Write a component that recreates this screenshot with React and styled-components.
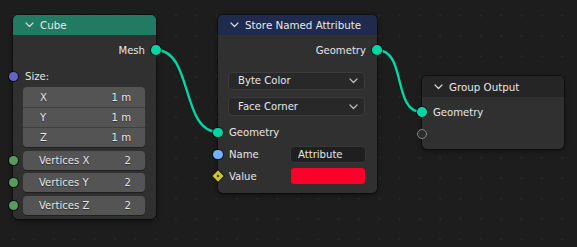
import React from "react";
import styled, { createGlobalStyle } from "styled-components";

const GlobalStyle = createGlobalStyle`
  body {
    margin: 0;
    background: #1d1d1d;
  }
`;

const Canvas = styled.div`
  position: relative;
  width: 577px;
  height: 247px;
  overflow: hidden;
  background-color: #1d1d1d;
  background-image: radial-gradient(circle, #282828 0.9px, transparent 1.3px);
  background-size: 20.33px 20.33px;
  background-position: 3.2px 5.5px;
  font-family: "DejaVu Sans", "Liberation Sans", sans-serif;
  font-size: 10.1px;
  color: #e6e6e6;
`;

const Wires = styled.svg`
  position: absolute;
  left: 0;
  top: 0;
  width: 577px;
  height: 247px;
  pointer-events: none;
`;

const Node = styled.div`
  position: absolute;
  left: ${(p) => p.x}px;
  top: ${(p) => p.y}px;
  width: ${(p) => p.w}px;
  display: flex;
  flex-direction: column;
  background: #303030;
  border-radius: 5px;
  box-shadow: 0 0 0 1px rgba(0, 0, 0, 0.35), 0 2px 5px rgba(0, 0, 0, 0.45);
`;

const Header = styled.div`
  height: ${(p) => p.h || 20}px;
  display: flex;
  align-items: center;
  padding-left: 12px;
  gap: 6px;
  background: ${(p) => p.color};
  border-radius: 5px 5px 0 0;
  font-size: 10.3px;
  color: #e8e8e8;
`;

const Body = styled.div`
  display: flex;
  flex-direction: column;
  padding: ${(p) => p.pad || "5px 0 5px"};
`;

const Row = styled.div`
  position: relative;
  height: ${(p) => p.h || 20}px;
  margin-top: ${(p) => p.mt || 0}px;
  display: flex;
  align-items: center;
  justify-content: ${(p) => (p.out ? "flex-end" : "flex-start")};
  padding: 0 11px 0 ${(p) => p.pl || 11}px;
`;

const Socket = styled.span`
  position: absolute;
  top: 50%;
  ${(p) => (p.out ? "right" : "left")}: -${(p) => (p.size || 9.5) / 2}px;
  width: ${(p) => p.size || 9.5}px;
  height: ${(p) => p.size || 9.5}px;
  margin-top: -${(p) => (p.size || 9.5) / 2}px;
  border-radius: 50%;
  background: ${(p) => p.color};
  box-shadow: 0 0 0 1px rgba(0, 0, 0, 0.55);
`;

const HollowSocket = styled(Socket)`
  background: #2c2c2c;
  box-shadow: none;
  border: 1.4px solid #858585;
  box-sizing: border-box;
`;

const Diamond = styled.span`
  position: absolute;
  top: 50%;
  left: -4px;
  width: 8px;
  height: 8px;
  margin-top: -4px;
  transform: rotate(45deg);
  background: #c9c72a;
  box-shadow: 0 0 0 1px rgba(0, 0, 0, 0.55);
  display: flex;
  align-items: center;
  justify-content: center;

  &::after {
    content: "";
    width: 2.8px;
    height: 2.8px;
    background: #2a2a10;
  }
`;

const VectorGroup = styled.div`
  display: flex;
  flex-direction: column;
  margin: 1px 11px 0 10px;
  border-radius: 4px;
  overflow: hidden;
  box-shadow: 0 1px 0 rgba(0, 0, 0, 0.35);
`;

const VectorField = styled.div`
  height: 20px;
  display: flex;
  align-items: center;
  justify-content: space-between;
  padding: 0 14px 0 17px;
  background: #545454;
  border-top: ${(p) => (p.first ? "none" : "1px solid #3f3f3f")};
  box-sizing: border-box;
  text-shadow: 0 1px 1px rgba(0, 0, 0, 0.45);
`;

const IntRow = styled.div`
  position: relative;
  height: 22.5px;
  display: flex;
  align-items: center;
  padding: 0 11px 0 10px;
  margin-top: ${(p) => p.mt || 0}px;
`;

const IntField = styled.div`
  flex: 1;
  height: 19px;
  display: flex;
  align-items: center;
  justify-content: space-between;
  padding: 0 14px 0 16px;
  background: #545454;
  border-radius: 4px;
  box-shadow: 0 1px 0 rgba(0, 0, 0, 0.35);
  text-shadow: 0 1px 1px rgba(0, 0, 0, 0.45);
`;

const Dropdown = styled.div`
  height: ${(p) => p.h}px;
  margin: ${(p) => p.mt}px 12px 0 10px;
  display: flex;
  align-items: center;
  justify-content: space-between;
  padding: 0 6px 0 9px;
  background: #282828;
  border: 1px solid #3b3b3b;
  border-radius: 4px;
  box-sizing: border-box;
`;

const Spacer = styled.div`
  flex: 1;
`;

const TextField = styled.div`
  width: 76px;
  height: ${(p) => p.h || 18}px;
  display: flex;
  align-items: center;
  padding-left: 7px;
  box-sizing: border-box;
  background: ${(p) => p.bg || "#1f1f1f"};
  border: 1px solid ${(p) => p.border || "#383838"};
  border-radius: 4px;
`;

const Chevron = ({ color = "#d8d8d8" }) => (
  <svg width="9" height="6" viewBox="0 0 9 6">
    <polyline
      points="1,1 4.5,4.5 8,1"
      fill="none"
      stroke={color}
      strokeWidth="1.2"
      strokeLinecap="round"
      strokeLinejoin="round"
    />
  </svg>
);

const wire = (x1, y1, x2, y2) => {
  const d = Math.max(30, (x2 - x1) * 0.6);
  return `M${x1},${y1} C${x1 + d},${y1} ${x2 - d},${y2} ${x2},${y2}`;
};

const GEO = "#00d6a3";

export default function App() {
  return (
    <>
      <GlobalStyle />
      <Canvas>
        <Wires viewBox="0 0 577 247">
          <path d={wire(156, 50, 218, 132)} stroke={GEO} strokeWidth="2.4" fill="none" />
          <path d={wire(377, 50, 422, 112)} stroke={GEO} strokeWidth="2.4" fill="none" />
        </Wires>

        <Node x={13} y={15} w={143}>
          <Header color="#217a62">
            <Chevron />
            <span>Cube</span>
          </Header>
          <Body pad="5px 0 2.75px">
            <Row out>
              Mesh
              <Socket out color={GEO} />
            </Row>
            <Row mt={6} pl={12}>
              Size:
              <Socket color="#6464c8" size={9} />
            </Row>
            <VectorGroup>
              <VectorField first>
                <span>X</span>
                <span>1 m</span>
              </VectorField>
              <VectorField>
                <span>Y</span>
                <span>1 m</span>
              </VectorField>
              <VectorField>
                <span>Z</span>
                <span>1 m</span>
              </VectorField>
            </VectorGroup>
            {["Vertices X", "Vertices Y", "Vertices Z"].map((label, i) => (
              <IntRow key={label} mt={i === 0 ? 1.75 : 0}>
                <Socket color="#5a9a5e" size={9} />
                <IntField>
                  <span>{label}</span>
                  <span>2</span>
                </IntField>
              </IntRow>
            ))}
          </Body>
        </Node>

        <Node x={218} y={15} w={159}>
          <Header color="#1e2a4e">
            <Chevron />
            <span>Store Named Attribute</span>
          </Header>
          <Body pad="5px 0 5.5px">
            <Row out pl={12}>
              Geometry
              <Socket out color={GEO} />
            </Row>
            <Dropdown mt={11.7} h={18.5}>
              <span>Byte Color</span>
              <Chevron color="#bdbdbd" />
            </Dropdown>
            <Dropdown mt={7} h={18.8}>
              <span>Face Corner</span>
              <Chevron color="#bdbdbd" />
            </Dropdown>
            <Row h={22} mt={5.5} pl={11}>
              Geometry
              <Socket color={GEO} />
            </Row>
            <Row h={22} pl={11}>
              Name
              <Spacer />
              <TextField h={17.5}>Attribute</TextField>
              <Socket color="#70b2ff" />
            </Row>
            <Row h={22} pl={11}>
              Value
              <Spacer />
              <TextField h={18} bg="#fb0029" border="#3a2a2a" />
              <Diamond />
            </Row>
          </Body>
        </Node>

        <Node x={422} y={76} w={142}>
          <Header color="#252525" h={21}>
            <Chevron />
            <span>Group Output</span>
          </Header>
          <Body pad="5px 0 5px">
            <Row pl={11}>
              Geometry
              <Socket color={GEO} />
            </Row>
            <Row mt={2}>
              <HollowSocket size={10} />
            </Row>
          </Body>
        </Node>
      </Canvas>
    </>
  );
}
